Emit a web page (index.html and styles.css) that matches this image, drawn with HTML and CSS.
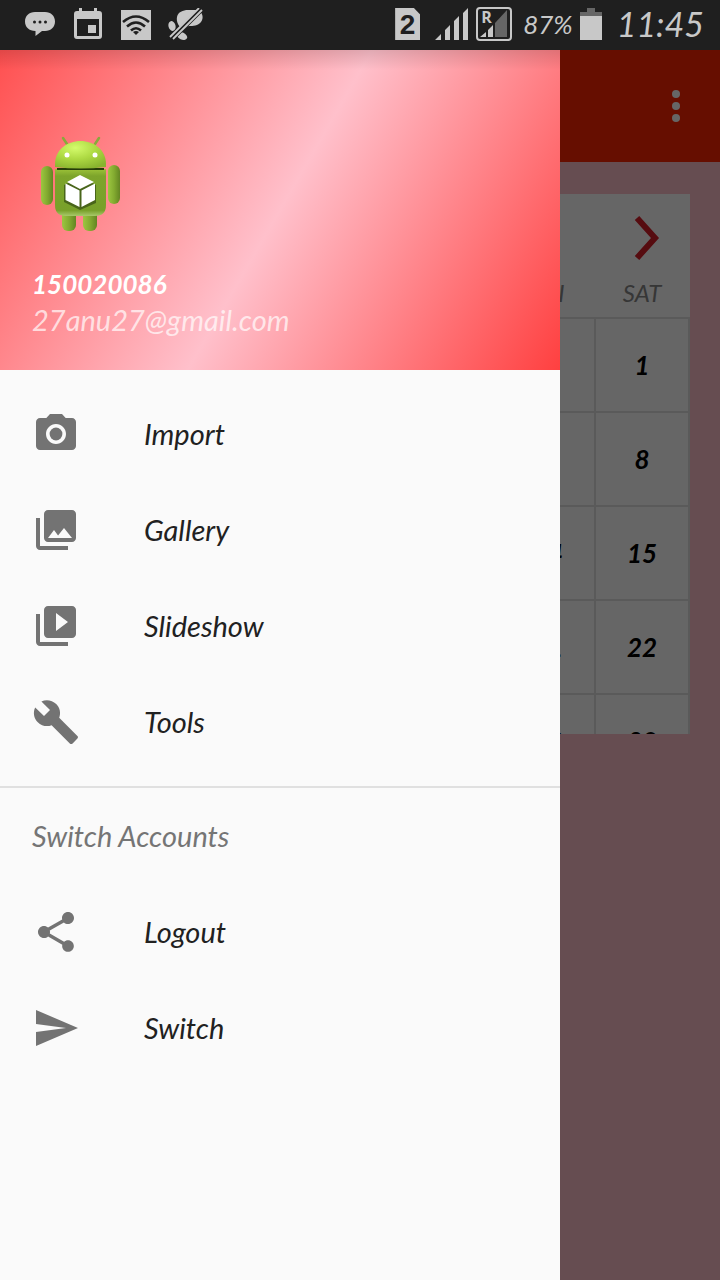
FILE: index.html
```html
<!DOCTYPE html>
<html lang="en">
<head>
<meta charset="utf-8">
<meta name="viewport" content="width=device-width, initial-scale=1">
<title>Calendar</title>
<link rel="stylesheet" href="styles.css">
</head>
<body>
<div class="screen">
  <header class="status">
    <div class="status-group notices">
      <svg class="glyph" viewBox="0 0 32 32" aria-hidden="true"><path fill="currentColor" d="M11 4h10c6 0 10 4 10 9.500S27 23 21 23h-3L11.500 28v-5C5 23 1 19 1 13.500S5 4 11 4z"/><g fill="#1f1f1f"><circle cx="10.500" cy="14" r="1.500"/><circle cx="16" cy="14" r="1.500"/><circle cx="21.500" cy="14" r="1.500"/></g></svg>
      <svg class="glyph" viewBox="0 0 32 32" aria-hidden="true"><path fill="currentColor" fill-rule="evenodd" d="M7 0h3v3h12V0h3v3h2a3 3 0 0 1 3 3v22a3 3 0 0 1-3 3H5a3 3 0 0 1-3-3V6a3 3 0 0 1 3-3h2zM5 11v17h22V11z"/><path fill="currentColor" d="M16 17h8v8h-8z"/></svg>
      <svg class="glyph" viewBox="0 0 32 32" aria-hidden="true"><path fill="currentColor" d="M1 2h30v30H1z"/><g fill="none" stroke="#1f1f1f" stroke-width="2.600"><path d="M3 14q13-11 26 0M7 18.500q9-8 18 0M11 22.500q5-4.500 10 0"/></g><path fill="#1f1f1f" d="M13 24q3-2 6 0l-3 3z"/></svg>
      <svg class="glyph wide" viewBox="0 0 36 32" aria-hidden="true"><g fill="currentColor"><path d="M9 9c1-5 6-7 11-7h9c6 2 7 8 4 12-3 4-8 4-12 4-2 0-3 3-6 3-4-2-7-7-6-12z"/><ellipse cx="4" cy="18" rx="3.500" ry="5" transform="rotate(-15 4 18)"/><ellipse cx="14" cy="28" rx="5.500" ry="3.500" transform="rotate(25 14 28)"/></g><path stroke="#1f1f1f" stroke-width="5.500" d="M4 30.500 33 1.500"/><path stroke="currentColor" stroke-width="1.800" d="M2 29 31 0M5 31 34 2"/></svg>
    </div>
    <div class="status-group system">
      <span class="sim">2</span>
      <svg class="signal" viewBox="0 0 34 32" aria-hidden="true"><path fill="currentColor" d="M0 32l6-6v6zM10 22l5-5v15h-5zM19 13l5-5v24h-5zM28 5l5-5v32h-5z"/></svg>
      <span class="roaming">R<svg class="roaming-bars" viewBox="0 0 28 27" aria-hidden="true"><path fill="#666" d="M15 13 27 0v27H15z"/><path fill="currentColor" d="M0 27l6-5v5zM8 20l5-5v12H8z"/></svg></span>
      <span class="battery-text">87%</span>
      <svg class="battery" viewBox="0 0 22 32" aria-hidden="true"><path fill="#666" d="M7 0h8v4h7v4H0V4h7z"/><path fill="currentColor" d="M0 8h22v24H0z"/></svg>
      <time class="clock">11:45</time>
    </div>
  </header>

  <div class="stage">
    <main class="page">
      <div class="toolbar">
        <button class="more" type="button" aria-label="More options"><svg viewBox="0 0 48 48" aria-hidden="true"><g fill="#fff"><circle cx="24" cy="12" r="4"/><circle cx="24" cy="24" r="4"/><circle cx="24" cy="36" r="4"/></g></svg></button>
      </div>
      <section class="calendar">
        <div class="month">
          <button class="next" type="button" aria-label="Next month"><svg viewBox="0 0 48 48" aria-hidden="true"><path d="M17 4 35 24 17 44" fill="none" stroke="#d81e28" stroke-width="6"/></svg></button>
        </div>
        <table class="days">
          <thead><tr><th></th><th></th><th></th><th></th><th></th><th>FRI</th><th>SAT</th></tr></thead>
          <tbody>
            <tr><td></td><td></td><td></td><td></td><td></td><td></td><td>1</td></tr>
            <tr><td></td><td></td><td></td><td></td><td></td><td>7</td><td>8</td></tr>
            <tr><td></td><td></td><td></td><td></td><td></td><td>14</td><td>15</td></tr>
            <tr><td></td><td></td><td></td><td></td><td></td><td>21</td><td>22</td></tr>
            <tr><td></td><td></td><td></td><td></td><td></td><td>28</td><td>29</td></tr>
          </tbody>
        </table>
      </section>
    </main>
    <div class="scrim"></div>

    <aside class="drawer">
      <div class="profile">
        <svg class="avatar" viewBox="0 0 96 96" role="img" aria-label="Profile picture">
          <defs>
            <linearGradient id="body" x1="0" y1="0" x2="0" y2="1"><stop offset="0" stop-color="#9cc238"/><stop offset=".15" stop-color="#7da42b"/><stop offset=".88" stop-color="#78a02a"/><stop offset="1" stop-color="#a8c96a"/></linearGradient>
            <radialGradient id="head" cx=".4" cy=".25" r=".8"><stop offset="0" stop-color="#d4fb6c"/><stop offset=".5" stop-color="#aeda43"/><stop offset="1" stop-color="#88b32e"/></radialGradient>
            <linearGradient id="limb"><stop offset="0" stop-color="#9cc640"/><stop offset=".5" stop-color="#83ab30"/><stop offset="1" stop-color="#638522"/></linearGradient>
          </defs>
          <path stroke="#89a93b" stroke-width="2.500" stroke-linecap="round" d="m31 2 4 6M67 2l-4 6"/>
          <g fill="url(#limb)"><rect x="9" y="30" width="12" height="39" rx="6"/><rect x="76" y="29" width="12" height="39" rx="6"/><rect x="30" y="70" width="14" height="25" rx="6"/><rect x="51" y="70" width="14" height="25" rx="6"/></g>
          <path fill="url(#body)" d="M23 33h51v36q0 11-11 11H34q-11 0-11-11z"/>
          <path fill="#253c08" d="M25 32h47v2H25z"/>
          <path fill="url(#head)" d="M23 31v-3C23 14 35 5 48.500 5S74 14 74 28v3q-25 3-51 0z"/>
          <circle cx="35" cy="19" r="2.500" fill="#fff"/><circle cx="63" cy="19" r="2.500" fill="#fff"/>
          <path fill="#49651a" d="m48 41 16 8v18L48 74l-16-8V49z"/>
          <path fill="#fff" d="m48 39 14 7-14 7-13-7zM33.500 47.500 47.500 54.500v16.500L33.500 64zM63 47.500 49.500 54.500v16.500L63 64z"/>
        </svg>
        <div class="name">150020086</div>
        <div class="email">27anu27@gmail.com</div>
      </div>
      <nav class="menu">
        <a class="item" href="#import"><svg viewBox="0 0 24 24" aria-hidden="true"><circle cx="12" cy="12" r="3.200"/><path d="M9 2 7.170 4H4c-1.100 0-2 .9-2 2v12c0 1.100.9 2 2 2h16c1.100 0 2-.9 2-2V6c0-1.100-.9-2-2-2h-3.170L15 2H9zm3 15c-2.760 0-5-2.240-5-5s2.240-5 5-5 5 2.240 5 5-2.240 5-5 5z"/></svg>Import</a>
        <a class="item" href="#gallery"><svg viewBox="0 0 24 24" aria-hidden="true"><path d="M22 16V4c0-1.100-.9-2-2-2H8c-1.100 0-2 .9-2 2v12c0 1.100.9 2 2 2h12c1.100 0 2-.9 2-2zm-11-4 2.030 2.710L16 11l4 5H8l3-4zM2 6v14c0 1.100.9 2 2 2h14v-2H4V6H2z"/></svg>Gallery</a>
        <a class="item" href="#slideshow"><svg viewBox="0 0 24 24" aria-hidden="true"><path d="M4 6H2v14c0 1.100.9 2 2 2h14v-2H4V6zm16-4H8c-1.100 0-2 .9-2 2v12c0 1.100.9 2 2 2h12c1.100 0 2-.9 2-2V4c0-1.100-.9-2-2-2zm-8 12.500v-9l6 4.500-6 4.500z"/></svg>Slideshow</a>
        <a class="item" href="#tools"><svg viewBox="0 0 24 24" aria-hidden="true"><path d="m22.700 19-9.100-9.100c.9-2.300.4-5-1.500-6.900-2-2-5-2.400-7.400-1.300L9 6 6 9 1.600 4.700C.4 7.100.9 10.100 2.900 12.100c1.900 1.900 4.600 2.400 6.900 1.500l9.100 9.100c.4.400 1 .4 1.400 0l2.300-2.300c.5-.4.5-1.100.1-1.400z"/></svg>Tools</a>
      </nav>
      <nav class="accounts" aria-labelledby="accounts-title">
        <h2 class="subhead" id="accounts-title">Switch Accounts</h2>
        <a class="item" href="#logout"><svg viewBox="0 0 24 24" aria-hidden="true"><path d="M18 16.080c-.76 0-1.440.3-1.960.77L8.910 12.700c.05-.23.09-.46.09-.7s-.04-.47-.09-.7l7.050-4.110c.54.5 1.250.81 2.040.81 1.660 0 3-1.340 3-3s-1.340-3-3-3-3 1.340-3 3c0 .24.040.47.09.7L8.040 9.810C7.500 9.310 6.790 9 6 9c-1.660 0-3 1.340-3 3s1.340 3 3 3c.79 0 1.500-.31 2.040-.81l7.120 4.160c-.05.210-.08.430-.08.650 0 1.610 1.310 2.920 2.920 2.920s2.920-1.310 2.920-2.920-1.310-2.920-2.920-2.920z"/></svg>Logout</a>
        <a class="item" href="#switch"><svg viewBox="0 0 24 24" aria-hidden="true"><path d="M2.010 21 23 12 2.010 3 2 10l15 2-15 2z"/></svg>Switch</a>
      </nav>
    </aside>
  </div>
</div>
</body>
</html>
```
FILE: styles.css
```css
* {
  box-sizing: border-box;
}

body {
  margin: 0;
  font-family: Lato, "Open Sans", sans-serif;
  font-style: italic;
  font-size: 29px;
  line-height: 36px;
}

svg {
  display: block;
}

button {
  padding: 0;
  border: 0;
  background: none;
}

.screen {
  display: flex;
  flex-direction: column;
  min-height: 100vh;
}

/* Status bar */
.status {
  display: flex;
  justify-content: space-between;
  align-items: center;
  height: 50px;
  padding: 0 16px 2px 24px;
  background: #1f1f1f;
  color: #c8c8c8;
}

.status-group {
  display: flex;
  align-items: center;
}

.notices {
  gap: 16px;
}

.system {
  gap: 7px;
}

.glyph {
  width: 32px;
  height: 32px;
}

.glyph.wide {
  width: 36px;
}

.sim {
  width: 25px;
  height: 32px;
  margin-right: 8px;
  background: currentColor;
  clip-path: polygon(0 0, 75% 0, 100% 20%, 100% 100%, 0 100%);
  font: bold 28px/34px "Liberation Sans", sans-serif;
  text-align: center;
}

.sim::first-letter {
  color: #1f1f1f;
}

.signal {
  width: 34px;
  height: 32px;
}

.roaming {
  position: relative;
  width: 36px;
  height: 34px;
  padding-left: 3px;
  border: 2px solid currentColor;
  border-radius: 4px;
  font: bold 16px/16px "Open Sans", sans-serif;
}

.roaming-bars {
  position: absolute;
  right: 2px;
  bottom: 2px;
  width: 28px;
  height: 27px;
}

.battery-text {
  margin-left: 4px;
  font-size: 26px;
}

.battery {
  width: 22px;
  height: 32px;
}

.clock {
  margin-left: 8px;
  font-size: 34px;
}

/* Page behind the drawer */
.stage {
  position: relative;
  flex: 1;
  display: flex;
}

.page {
  flex: 1;
  background: #ffc0cb;
}

.toolbar {
  display: flex;
  justify-content: flex-end;
  align-items: center;
  height: 112px;
  padding-right: 20px;
  background: #ff2400;
}

.more svg,
.next svg {
  width: 48px;
  height: 48px;
}

.calendar {
  height: 540px;
  margin: 32px 30px;
  overflow: hidden;
  background: #fff;
}

.month {
  display: flex;
  justify-content: flex-end;
  padding: 20px 22px 6px;
}

.days {
  width: 100%;
  table-layout: fixed;
  border-collapse: collapse;
  text-align: center;
}

.days th {
  height: 50px;
  padding: 0;
  color: #888;
  font-size: 24px;
  font-weight: 400;
}

.days td {
  height: 94px;
  padding: 0;
  border: 2px solid #e0e0e0;
  font-size: 26px;
  font-weight: 700;
}

.scrim {
  position: absolute;
  inset: 0;
  background: rgba(0, 0, 0, 0.6);
}

/* Drawer */
.drawer {
  position: absolute;
  inset: 0 auto 0 0;
  width: calc(100% - 160px);
  max-width: 560px;
  background: #fafafa;
}

.profile {
  display: flex;
  flex-direction: column;
  height: 320px;
  padding: 86px 32px 30px;
  background:
    linear-gradient(rgba(0, 0, 0, 0.12), transparent 20px),
    linear-gradient(120deg, #ff5050, #ffc0cb 50%, #ff4040);
  color: #fff;
}

.avatar {
  width: 96px;
  height: 96px;
  margin-bottom: 34px;
}

.name {
  font-size: 26px;
  font-weight: 700;
}

.email {
  color: rgba(255, 255, 255, 0.7);
}

.menu,
.accounts {
  display: flex;
  flex-direction: column;
}

.menu {
  padding: 16px 0;
}

.accounts {
  border-top: 2px solid #e0e0e0;
}

.item {
  display: flex;
  align-items: center;
  gap: 64px;
  height: 96px;
  padding: 0 32px;
  color: #212121;
  text-decoration: none;
}

.item svg {
  width: 48px;
  height: 48px;
  fill: #737373;
}

.subhead {
  margin: 0;
  padding: 30px 32px;
  color: #757575;
  font-size: 29px;
  font-weight: 400;
}
```
